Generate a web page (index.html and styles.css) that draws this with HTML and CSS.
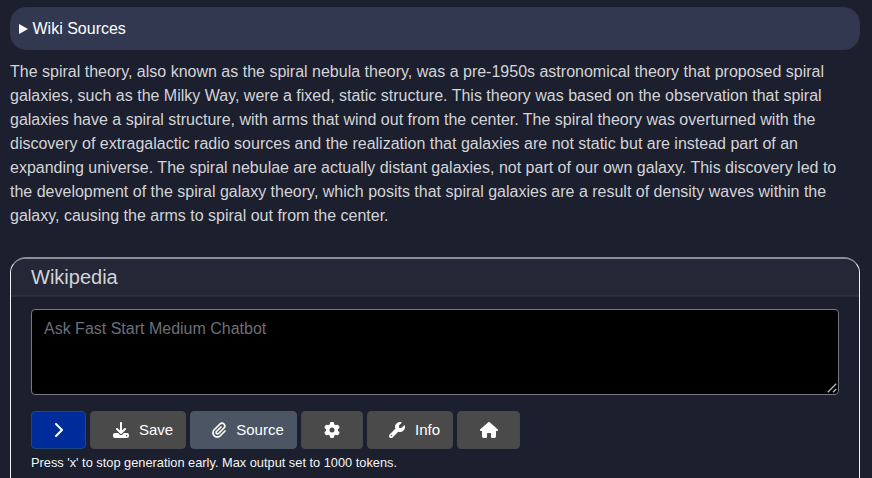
FILE: index.html
```html
<!DOCTYPE html>
<html lang="en">
<head>
<meta charset="utf-8">
<title>Wikipedia</title>
<link rel="stylesheet" href="styles.css">
</head>
<body>
<details class="sources"><summary><svg class="marker" viewBox="0 0 9 10"><path d="M0 0L9 5L0 10z"/></svg>Wiki Sources</summary></details>
<p class="answer">The spiral theory, also known as the spiral nebula theory, was a pre-1950s astronomical theory that proposed spiral<br>galaxies, such as the Milky Way, were a fixed, static structure. This theory was based on the observation that spiral<br>galaxies have a spiral structure, with arms that wind out from the center. The spiral theory was overturned with the<br>discovery of extragalactic radio sources and the realization that galaxies are not static but are instead part of an<br>expanding universe. The spiral nebulae are actually distant galaxies, not part of our own galaxy. This discovery led to<br>the development of the spiral galaxy theory, which posits that spiral galaxies are a result of density waves within the<br>galaxy, causing the arms to spiral out from the center.</p>
<section class="card">
<h1 class="card-header">Wikipedia</h1>
<div class="card-body">
<div class="prompt-wrap">
<textarea class="prompt" placeholder="Ask Fast Start Medium Chatbot"></textarea>
<svg class="grip" viewBox="0 0 10 10"><path d="M.8 9.200L9.200 .8M6 9.200L9.200 6"/></svg>
</div>
<div class="toolbar">
<button class="btn send" aria-label="Send"><svg class="icon" viewBox="0 0 320 512"><path d="M310.6 233.4c12.5 12.5 12.5 32.8 0 45.3l-192 192c-12.5 12.5-32.8 12.5-45.3 0s-12.5-32.8 0-45.3L242.7 256 73.4 86.6c-12.5-12.5-12.5-32.8 0-45.3s32.8-12.5 45.3 0l192 192z"/></svg></button>
<button class="btn save"><svg class="icon" viewBox="0 0 512 512"><path d="M288 32c0-17.7-14.3-32-32-32s-32 14.3-32 32V274.7l-73.4-73.4c-12.5-12.5-32.8-12.5-45.3 0s-12.5 32.8 0 45.3l128 128c12.5 12.5 32.8 12.5 45.3 0l128-128c12.5-12.5 12.5-32.8 0-45.3s-32.8-12.5-45.3 0L288 274.7V32zM64 352c-35.3 0-64 28.7-64 64v32c0 35.3 28.7 64 64 64H448c35.3 0 64-28.7 64-64V416c0-35.3-28.7-64-64-64H346.5l-45.3 45.3c-25 25-65.5 25-90.5 0L165.5 352H64zm368 56a24 24 0 1 1 0 48 24 24 0 1 1 0-48z"/></svg><span>Save</span></button>
<button class="btn source"><svg class="icon" viewBox="0 0 448 512"><path d="M364.2 83.8c-24.4-24.4-64-24.4-88.4 0l-184 184c-42.1 42.1-42.1 110.3 0 152.4s110.3 42.1 152.4 0l152-152c10.9-10.9 28.7-10.9 39.6 0s10.9 28.7 0 39.6l-152 152c-64 64-167.6 64-231.6 0s-64-167.6 0-231.6l184-184c46.3-46.3 121.3-46.3 167.6 0s46.3 121.3 0 167.6l-176 176c-28.6 28.6-75 28.6-103.6 0s-28.6-75 0-103.6l144-144c10.9-10.9 28.7-10.9 39.6 0s10.9 28.7 0 39.6l-144 144c-6.7 6.7-6.7 17.7 0 24.4s17.7 6.7 24.4 0l176-176c24.4-24.4 24.4-64 0-88.4z"/></svg><span>Source</span></button>
<button class="btn settings" aria-label="Settings"><svg class="icon" viewBox="0 0 512 512"><path d="M495.9 166.6c3.2 8.7 .5 18.4-6.4 24.6l-43.3 39.4c1.1 8.3 1.7 16.8 1.7 25.4s-.6 17.1-1.7 25.4l43.3 39.4c6.9 6.2 9.6 15.9 6.4 24.6c-4.4 11.9-9.7 23.3-15.8 34.3l-4.7 8.1c-6.6 11-14 21.4-22.1 31.2c-5.9 7.2-15.7 9.6-24.5 6.8l-55.7-17.7c-13.4 10.3-28.2 18.9-44 25.4l-12.5 57.1c-2 9.1-9 16.3-18.2 17.8c-13.8 2.3-28 3.5-42.5 3.5s-28.7-1.2-42.5-3.5c-9.2-1.5-16.2-8.7-18.2-17.8l-12.5-57.1c-15.8-6.5-30.6-15.1-44-25.4L83.1 425.9c-8.8 2.8-18.6 .3-24.5-6.8c-8.1-9.8-15.5-20.2-22.1-31.2l-4.7-8.1c-6.1-11-11.4-22.4-15.8-34.3c-3.2-8.7-.5-18.4 6.4-24.6l43.3-39.4C64.6 273.1 64 264.6 64 256s.6-17.1 1.7-25.4L22.4 191.2c-6.9-6.2-9.6-15.9-6.4-24.6c4.4-11.9 9.7-23.3 15.8-34.3l4.7-8.1c6.6-11 14-21.4 22.1-31.2c5.9-7.2 15.7-9.6 24.5-6.8l55.7 17.7c13.4-10.3 28.2-18.9 44-25.4l12.5-57.1c2-9.1 9-16.3 18.2-17.8C227.3 1.2 241.5 0 256 0s28.7 1.2 42.5 3.5c9.2 1.5 16.2 8.7 18.2 17.8l12.5 57.1c15.8 6.5 30.6 15.1 44 25.4l55.7-17.7c8.8-2.8 18.6-.3 24.5 6.8c8.1 9.8 15.5 20.2 22.1 31.2l4.7 8.1c6.1 11 11.4 22.4 15.8 34.3zM256 336a80 80 0 1 0 0-160 80 80 0 1 0 0 160z"/></svg></button>
<button class="btn info"><svg class="icon" viewBox="0 0 512 512"><path d="M352 320c88.4 0 160-71.6 160-160c0-15.3-2.2-30.1-6.2-44.2c-3.1-10.8-16.4-13.2-24.3-5.3l-76.8 76.8c-3 3-7.1 4.7-11.3 4.7H336c-8.8 0-16-7.2-16-16V118.6c0-4.2 1.7-8.3 4.7-11.3l76.8-76.8c7.9-7.9 5.4-21.2-5.3-24.3C382.1 2.2 367.3 0 352 0C263.6 0 192 71.6 192 160c0 19.1 3.4 37.5 9.5 54.5L19.9 396.1C7.2 408.8 0 426.1 0 444.1C0 481.6 30.4 512 67.9 512c18 0 35.3-7.2 48-19.9L297.5 310.5c17 6.2 35.4 9.5 54.5 9.5zM80 408a24 24 0 1 1 0 48 24 24 0 1 1 0-48z"/></svg><span>Info</span></button>
<button class="btn home" aria-label="Home"><svg class="icon" viewBox="0 0 576 512"><path d="M575.8 255.5c0 18-15 32.1-32 32.1h-32V456c0 31-25 56-56 56h-63.500c-22 0-40-18-40-40V376c0-13-11-24-24-24h-80c-13 0-24 11-24 24v96c0 22-18 40-40 40H120c-31 0-56-25-56-56V287.600H32c-18 0-32-14-32-32.100 0-9 3-17 10-24L266.400 8c7-7 15-8 22-8s15 2 21 7L564.800 231.500c8 7 12 15 11 24z"/></svg></button>
</div>
<p class="hint">Press 'x' to stop generation early. Max output set to 1000 tokens.</p>
</div>
</section>
</body>
</html>
```
FILE: styles.css
```css
* { box-sizing: border-box; }
body {
  margin: 0;
  height: 478px;
  padding: 7px 12px 0 10px;
  overflow: hidden;
  background: #1c1f2e;
  color: #d3d4d7;
  font: 16px/24px "Liberation Sans", Arial, sans-serif;
}
.sources {
  height: 43px;
  padding: 9px 8px;
  border: 1px solid #343743;
  border-radius: 16px;
  background: #31384f;
  color: #fff;
}
.sources summary { display: flex; align-items: center; list-style: none; }
.marker { width: 9px; height: 10px; margin: 0 5px 0 -0.5px; fill: #fff; }
.answer { margin: 10px 0 29px; white-space: nowrap; }
.card {
  height: 221px;
  border: 1px solid #f0f1f4;
  border-top: 2px solid #8b8d94;
  border-bottom: 0;
  border-radius: 16px 16px 0 0;
}
.card-header {
  height: 38px;
  margin: 0;
  padding: 0 20px;
  border-bottom: 2px solid #2c2e3b;
  border-radius: 15px 15px 0 0;
  background: #242735;
  font-size: 20px;
  font-weight: 400;
  line-height: 36px;
}
.card-body { padding: 12px 20px 0; }
.prompt-wrap { position: relative; }
.prompt {
  display: block;
  width: 100%;
  height: 86px;
  padding: 7px 12px 6px;
  border: 1px solid #777980;
  border-radius: 4px;
  outline: 0;
  background: #000;
  color: #fff;
  font: inherit;
  resize: none;
}
.prompt::placeholder { color: #6c7079; opacity: 1; }
.grip {
  position: absolute;
  right: 2px;
  bottom: 2px;
  width: 10px;
  height: 10px;
  fill: none;
  stroke: #b8b8b8;
  stroke-width: 1.3;
}
.toolbar { display: flex; gap: 4px; margin-top: 16px; }
.btn {
  display: flex;
  align-items: center;
  justify-content: center;
  gap: 10px;
  height: 38px;
  padding: 0;
  border: 1px solid #45484d;
  border-radius: 4px;
  background: #4a4a4a;
  color: #fff;
  font: 15px/24px "Liberation Sans", Arial, sans-serif;
}
.icon { height: 16px; fill: currentColor; }
.send { width: 55px; padding-right: 1px; border-color: #204879; background: #002c9b; }
.save { width: 96px; padding-left: 10px; }
.source { width: 107px; padding-left: 9px; border-color: #4b5563; background: #4b5563; }
.settings { width: 62px; }
.info { width: 86px; padding-left: 9px; }
.home { width: 63px; }
.hint { margin: 4px 0 0; color: #f4f4f5; font-size: 12.8px; line-height: 20px; }
```
